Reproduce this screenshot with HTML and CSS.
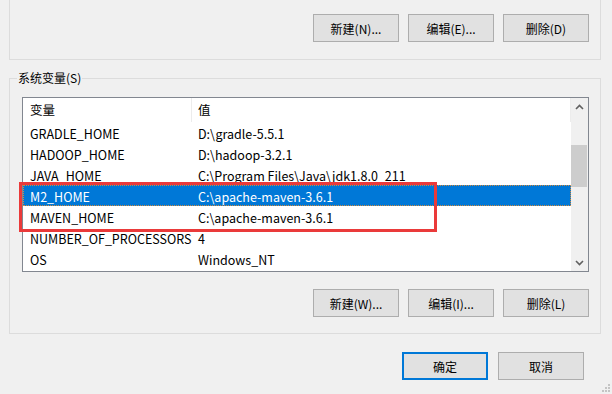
FILE: index.html
```html
<!DOCTYPE html>
<html lang="zh-CN">
<head>
    <meta charset="UTF-8">
    <meta name="viewport" content="width=device-width, initial-scale=1.0">
    <title>环境变量</title>
    <link rel="stylesheet" href="styles.css">
</head>
<body>
    <div id="dialog">
        <div class="group group-top">
            <div class="btn-row">
                <button class="btn">新建(N)...</button>
                <button class="btn">编辑(E)...</button>
                <button class="btn">删除(D)</button>
            </div>
        </div>

        <fieldset class="group group-sys">
            <legend>系统变量(S)</legend>
            <div class="list">
                <div class="list-body">
                    <div class="list-head">
                        <span class="col-name">变量</span>
                        <span class="col-value">值</span>
                    </div>
                    <div class="row"><span class="col-name">GRADLE_HOME</span><span class="col-value">D:\gradle-5.5.1</span></div>
                    <div class="row"><span class="col-name">HADOOP_HOME</span><span class="col-value">D:\hadoop-3.2.1</span></div>
                    <div class="row"><span class="col-name">JAVA_HOME</span><span class="col-value">C:\Program Files\Java\jdk1.8.0_211</span></div>
                    <div class="row selected"><span class="col-name">M2_HOME</span><span class="col-value">C:\apache-maven-3.6.1</span></div>
                    <div class="row"><span class="col-name">MAVEN_HOME</span><span class="col-value">C:\apache-maven-3.6.1</span></div>
                    <div class="row"><span class="col-name">NUMBER_OF_PROCESSORS</span><span class="col-value">4</span></div>
                    <div class="row"><span class="col-name">OS</span><span class="col-value">Windows_NT</span></div>
                </div>
                <div class="scrollbar">
                    <div class="sb-arrow">
                        <svg width="9" height="6" viewBox="0 0 9 6"><path d="M1 5 L4.5 1.5 L8 5" fill="none" stroke="#606060" stroke-width="1.6"/></svg>
                    </div>
                    <div class="sb-track"><div class="sb-thumb"></div></div>
                    <div class="sb-arrow">
                        <svg width="9" height="6" viewBox="0 0 9 6"><path d="M1 1 L4.5 4.5 L8 1" fill="none" stroke="#606060" stroke-width="1.6"/></svg>
                    </div>
                </div>
                <!-- red highlight drawn over the two maven rows -->
                <div class="mark"></div>
            </div>
            <div class="btn-row">
                <button class="btn">新建(W)...</button>
                <button class="btn">编辑(I)...</button>
                <button class="btn">删除(L)</button>
            </div>
        </fieldset>

        <div class="footer">
            <button class="btn btn-default">确定</button>
            <button class="btn">取消</button>
        </div>

        <svg class="grip" width="10" height="10" viewBox="0 0 10 10">
            <rect x="8" y="2" width="2" height="2" fill="#c4c4c4"/>
            <rect x="5" y="5" width="2" height="2" fill="#c4c4c4"/>
            <rect x="8" y="5" width="2" height="2" fill="#c4c4c4"/>
            <rect x="2" y="8" width="2" height="2" fill="#c4c4c4"/>
            <rect x="5" y="8" width="2" height="2" fill="#c4c4c4"/>
            <rect x="8" y="8" width="2" height="2" fill="#c4c4c4"/>
        </svg>
    </div>
</body>
</html>
```

FILE: styles.css
```css
*{
    margin: 0;
    padding: 0;
    box-sizing: border-box;
}
body{
    width: 612px;
    height: 394px;
    overflow: hidden;
    background-color: #f0f0f0;
    font-family: "Microsoft YaHei UI", "Noto Sans CJK SC", sans-serif;
    font-size: 12px;
    color: #000;
}
#dialog{
    position: relative;
    height: 394px;
}
.group{
    width: 592px;
    margin-left: 9px;
    border: 1px solid #dcdcdc;
    padding: 0 11px 16px 12px;
}
.group-top{
    border-top: none;
    padding-top: 14px;
    padding-bottom: 17px;
}
.group-sys{
    margin-top: 10px;
    padding-top: 11px;
    min-width: 0;
}
.group-sys legend{
    line-height: 16px;
    padding: 0 1px;
    margin-left: -5px;
    color: #000;
}
.btn-row{
    display: flex;
    justify-content: flex-end;
    gap: 9px;
}
.group-sys .btn-row{
    margin-top: 17px;
}
.btn{
    width: 86px;
    height: 28px;
    background-color: #e1e1e1;
    border: 1px solid #adadad;
    font-family: inherit;
    font-size: 12px;
    color: #000;
}
.btn-default{
    border: 2px solid #0078d7;
}
.list{
    position: relative;
    display: flex;
    height: 175px;
    border: 1px solid #828790;
    background-color: #fff;
    font-size: 12.5px;
}
.list-body{
    flex: 1;
    min-width: 0;
}
.list-head{
    display: flex;
    height: 24px;
    line-height: 24px;
}
.list-head .col-value{
    border-left: 1px solid #ececec;
    border-right: 1px solid #ececec;
    padding-left: 6px;
}
.col-name{
    width: 168px;
    flex: none;
    padding-left: 7px;
    white-space: nowrap;
}
.col-value{
    flex: 1;
    padding-left: 7px;
    white-space: nowrap;
}
.row{
    display: flex;
    height: 21px;
    line-height: 19px;
    padding-top: 2px;
}
.row.selected{
    background-color: #0078d7;
    color: #fff;
    outline: 1px dotted #d28a3c;
    outline-offset: -1px;
}
.scrollbar{
    width: 17px;
    flex: none;
    display: flex;
    flex-direction: column;
    background-color: #f0f0f0;
}
.sb-arrow{
    height: 17px;
    display: flex;
    justify-content: center;
    align-items: center;
}
.sb-track{
    flex: 1;
}
.sb-thumb{
    margin: 30px 1px 0 0;
    height: 42px;
    background-color: #cdcdcd;
}
.mark{
    position: absolute;
    left: -4px;
    top: 84px;
    width: 418px;
    height: 50px;
    border: 3px solid #ea3a3a;
}
.footer{
    display: flex;
    justify-content: flex-end;
    gap: 10px;
    padding-right: 28px;
    margin-top: 18px;
}
.grip{
    position: absolute;
    right: 2px;
    bottom: 2px;
}
```
